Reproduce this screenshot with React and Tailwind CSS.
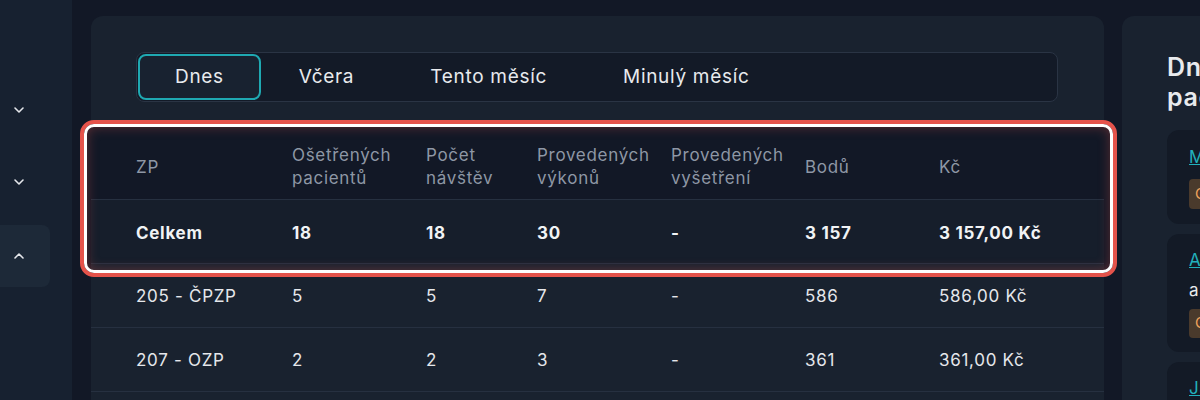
import React from "react";

const Chevron = ({ up }) => (
  <svg width="12" height="8" viewBox="0 0 12 8" fill="none">
    <path
      d={up ? "M2 6 L6 2 L10 6" : "M2 2 L6 6 L10 2"}
      stroke="#e5e7eb"
      strokeWidth="1.6"
      strokeLinecap="round"
      strokeLinejoin="round"
    />
  </svg>
);

const cols = "grid grid-cols-[156px_134px_111px_134px_134px_134px_1fr] items-center pl-[45px]";

const rows = [
  ["205 - ČPZP", "5", "5", "7", "-", "586", "586,00 Kč"],
  ["207 - OZP", "2", "2", "3", "-", "361", "361,00 Kč"],
];

export default function App() {
  return (
    <div
      className="w-[1200px] h-[400px] overflow-hidden bg-[#121826] flex relative tracking-[0.7px]"
      style={{ fontFamily: "Inter, 'Noto Sans', sans-serif" }}
    >
      {/* sidebar */}
      <div className="w-[72px] shrink-0 bg-[#172130] flex flex-col">
        <div className="h-[70px] mt-[75px] flex items-center pl-[13px]">
          <Chevron />
        </div>
        <div className="h-[74px] flex items-center pl-[13px]">
          <Chevron />
        </div>
        <div className="h-[62px] w-[50px] mt-[6px] bg-[#1d2938] rounded-r-lg flex items-center pl-[13px]">
          <Chevron up />
        </div>
      </div>

      {/* main card */}
      <div className="ml-[19px] mt-[16px] w-[1013px] shrink-0 bg-[#19222f] rounded-t-xl flex flex-col">
        <div className="pt-[36px] px-[45px]">
          <div className="h-[50px] w-[922px] bg-[#131a27] border border-[#2a3444] rounded-lg flex items-center p-px text-[19px] text-[#e8eaed]">
            <div className="h-full px-[35px] flex items-center border-2 border-[#1fa9b2] rounded-lg bg-[#182230]">
              Dnes
            </div>
            <div className="h-full px-[38px] flex items-center">Včera</div>
            <div className="h-full px-[38px] flex items-center">Tento měsíc</div>
            <div className="h-full px-[38px] flex items-center">Minulý měsíc</div>
          </div>
        </div>

        <div className="mt-[23px] text-[17px]">
          <div className={`${cols} h-[75px] pt-[10px] bg-[#121826] text-[#8e97a5] leading-[23px] border-b border-[#263040]`}>
            <div>ZP</div>
            <div>Ošetřených<br />pacientů</div>
            <div>Počet<br />návštěv</div>
            <div>Provedených<br />výkonů</div>
            <div>Provedených<br />vyšetření</div>
            <div>Bodů</div>
            <div>Kč</div>
          </div>
          <div className={`${cols} h-[64px] pt-[5px] bg-[#161e2b] text-[#f1f3f5] font-bold border-b border-[#263040]`}>
            <div>Celkem</div>
            <div>18</div>
            <div>18</div>
            <div>30</div>
            <div>-</div>
            <div>3 157</div>
            <div>3 157,00 Kč</div>
          </div>
          {rows.map((r) => (
            <div key={r[0]} className={`${cols} h-[64px] pt-[3px] text-[#e5e7eb] border-b border-[#263040]`}>
              {r.map((c, i) => (
                <div key={i}>{c}</div>
              ))}
            </div>
          ))}
        </div>
      </div>

      {/* right panel */}
      <div className="ml-[18px] mt-[16px] w-[300px] shrink-0 bg-[#19222f] rounded-tl-xl pl-[45px] pt-[36px]">
        <div className="text-[25px] leading-[30px] font-semibold text-[#e8eaed]">
          Dnešní<br />pacienti
        </div>
        <div className="mt-[18px] flex flex-col gap-[10px]">
          <div className="h-[94px] rounded-xl bg-[#131a26] pl-[22px] pt-[15px]">
            <div className="text-[17px] text-[#22b0bc] underline">Marie Nováková</div>
            <div className="mt-[8px] inline-block bg-[#4a3a2c] text-[#f0a35c] text-[15px] rounded px-[6px] py-[4px]">Objednaná</div>
          </div>
          <div className="h-[118px] rounded-xl bg-[#131a26] pl-[22px] pt-[14px]">
            <div className="text-[17px] text-[#22b0bc] underline">Adam Svoboda</div>
            <div className="text-[17px] text-[#e8eaed] mt-[4px]">akutní</div>
            <div className="mt-[6px] inline-block bg-[#4a3a2c] text-[#f0a35c] text-[15px] rounded px-[6px] py-[3px]">Objednaný</div>
          </div>
          <div className="h-[80px] rounded-xl bg-[#131a26] pl-[22px] pt-[14px]">
            <div className="text-[17px] text-[#22b0bc] underline">Jan Dvořák</div>
          </div>
        </div>
      </div>

      {/* highlight overlay */}
      <div className="absolute left-[80px] top-[120px] w-[1037px] h-[157px] rounded-[14px] border-4 border-[#e5534b] pointer-events-none">
        <div className="w-full h-full rounded-[10px] border-[3px] border-white shadow-[inset_0_0_12px_rgba(229,83,75,0.35)]" />
      </div>
    </div>
  );
}
